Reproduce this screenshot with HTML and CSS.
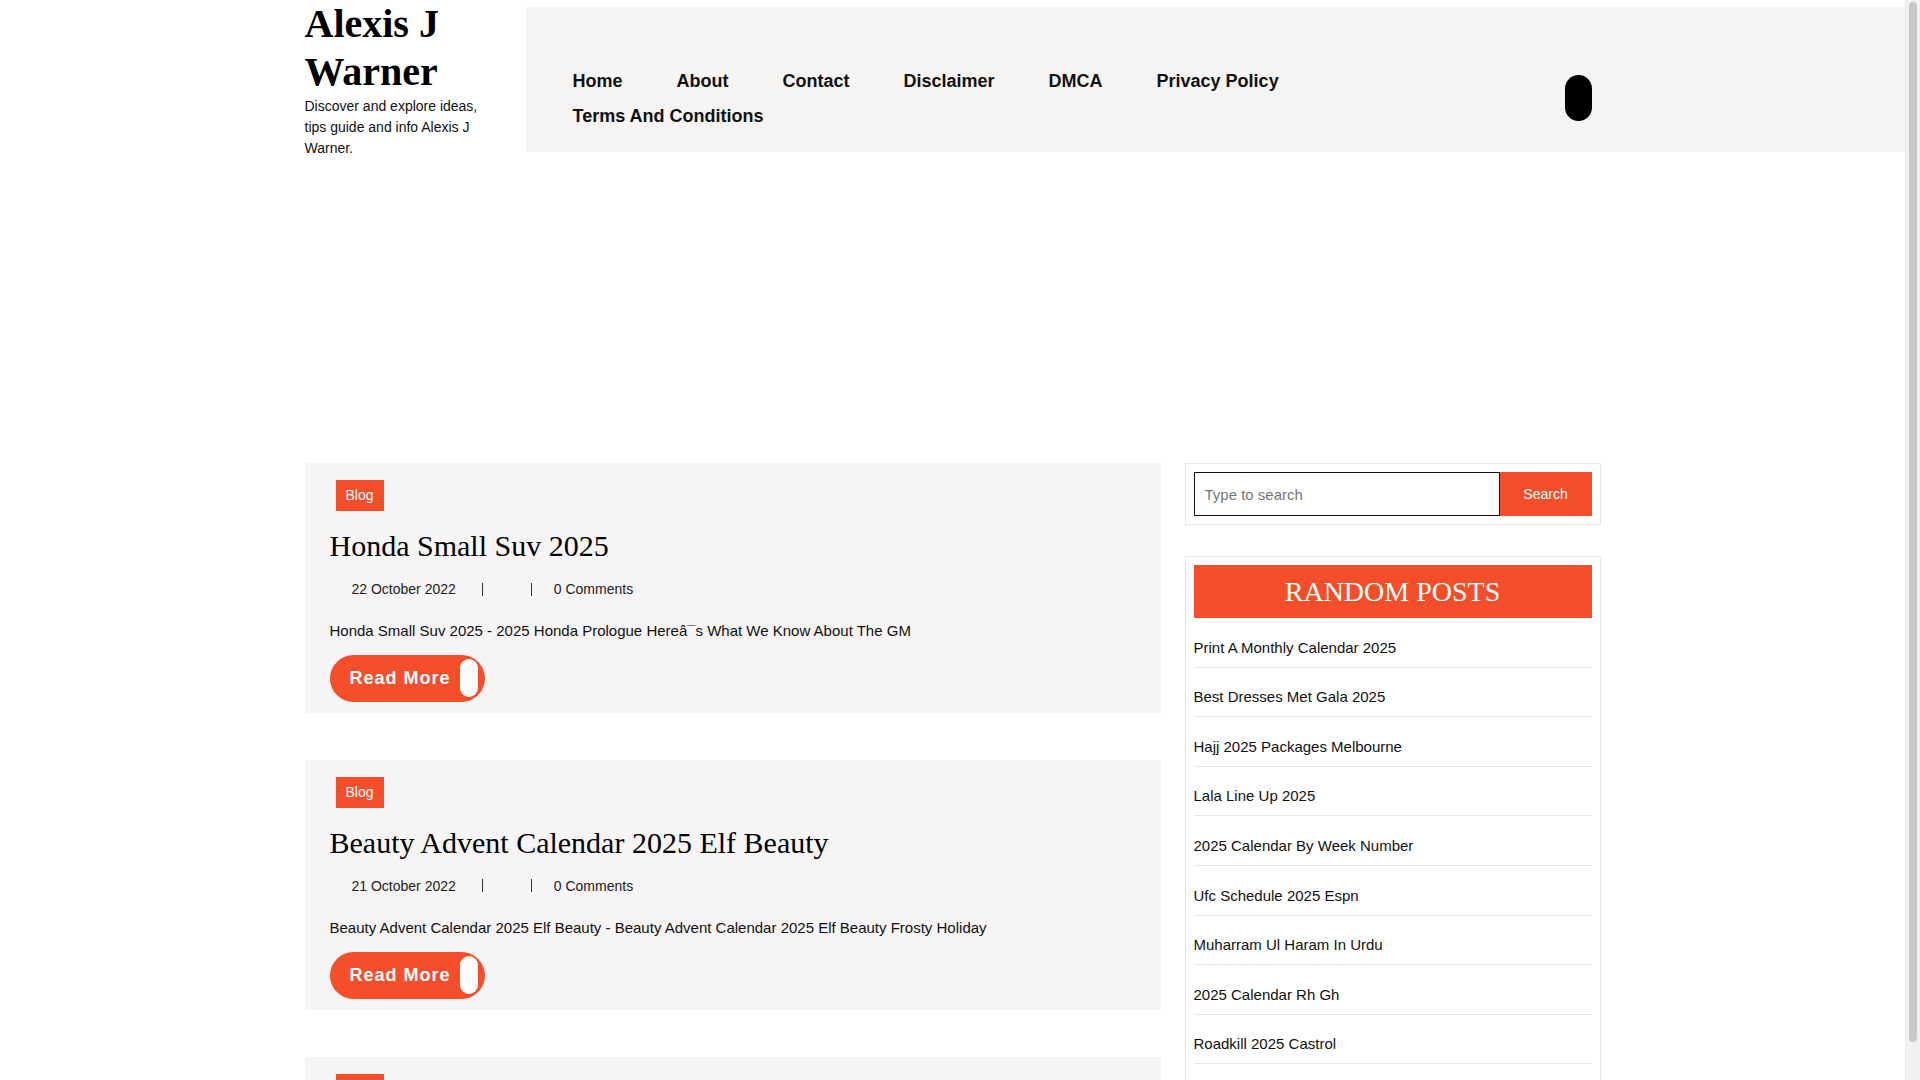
FILE: index.html
```html
<!DOCTYPE html>
<html lang="en">
<head>
<meta charset="utf-8">
<title>Alexis J Warner</title>
<link rel="stylesheet" href="styles.css">
</head>
<body>
<header class="site-header">
  <div class="brand">
    <h1 class="site-title">Alexis J Warner</h1>
    <p class="site-desc">Discover and explore ideas, tips guide and info Alexis J Warner.</p>
  </div>
  <nav class="main-nav">
    <div class="nav-inner">
      <ul class="menu">
        <li><a href="#">Home</a></li>
        <li><a href="#">About</a></li>
        <li><a href="#">Contact</a></li>
        <li><a href="#">Disclaimer</a></li>
        <li><a href="#">DMCA</a></li>
        <li><a href="#">Privacy Policy</a></li>
        <li><a href="#">Terms And Conditions</a></li>
      </ul>
      <button class="nav-toggle" type="button" aria-label="Search"></button>
    </div>
  </nav>
</header>

<main class="content">
  <div class="posts">
    <article class="post">
      <div class="cats"><a class="badge" href="#">Blog</a></div>
      <h2 class="post-title">Honda Small Suv 2025</h2>
      <div class="meta">
        <span class="meta-date">22 October 2022</span>
        <span class="meta-sep"></span>
        <span class="meta-author"></span>
        <span class="meta-sep"></span>
        <span class="meta-comments">0 Comments</span>
      </div>
      <p class="excerpt">Honda Small Suv 2025 - 2025 Honda Prologue Hereâ¯s What We Know About The GM</p>
      <a class="read-more" href="#"><span class="rm-text">Read More</span><span class="rm-knob"></span></a>
    </article>

    <article class="post">
      <div class="cats"><a class="badge" href="#">Blog</a></div>
      <h2 class="post-title">Beauty Advent Calendar 2025 Elf Beauty</h2>
      <div class="meta">
        <span class="meta-date">21 October 2022</span>
        <span class="meta-sep"></span>
        <span class="meta-author"></span>
        <span class="meta-sep"></span>
        <span class="meta-comments">0 Comments</span>
      </div>
      <p class="excerpt">Beauty Advent Calendar 2025 Elf Beauty - Beauty Advent Calendar 2025 Elf Beauty Frosty Holiday</p>
      <a class="read-more" href="#"><span class="rm-text">Read More</span><span class="rm-knob"></span></a>
    </article>

    <article class="post">
      <div class="cats"><a class="badge" href="#">Blog</a></div>
      <h2 class="post-title">2025 Calendar By Week Number</h2>
      <div class="meta">
        <span class="meta-date">20 October 2022</span>
        <span class="meta-sep"></span>
        <span class="meta-author"></span>
        <span class="meta-sep"></span>
        <span class="meta-comments">0 Comments</span>
      </div>
      <p class="excerpt">2025 Calendar By Week Number - Printable 2025 Calendar With Week Numbers</p>
      <a class="read-more" href="#"><span class="rm-text">Read More</span><span class="rm-knob"></span></a>
    </article>
  </div>

  <aside class="sidebar">
    <section class="widget search-widget">
      <form class="search-form">
        <input class="search-input" type="text" placeholder="Type to search">
        <button class="search-btn" type="button">Search</button>
      </form>
    </section>
    <section class="widget random-widget">
      <h3 class="widget-title">RANDOM POSTS</h3>
      <ul class="post-list">
        <li><a href="#">Print A Monthly Calendar 2025</a></li>
        <li><a href="#">Best Dresses Met Gala 2025</a></li>
        <li><a href="#">Hajj 2025 Packages Melbourne</a></li>
        <li><a href="#">Lala Line Up 2025</a></li>
        <li><a href="#">2025 Calendar By Week Number</a></li>
        <li><a href="#">Ufc Schedule 2025 Espn</a></li>
        <li><a href="#">Muharram Ul Haram In Urdu</a></li>
        <li><a href="#">2025 Calendar Rh Gh</a></li>
        <li><a href="#">Roadkill 2025 Castrol</a></li>
        <li><a href="#">Honda Small Suv 2025</a></li>
      </ul>
    </section>
  </aside>
</main>

<div class="scrollbar" aria-hidden="true"><div class="scroll-thumb"></div></div>
</body>
</html>
```
FILE: styles.css
```css
* { box-sizing: border-box; }

body {
  margin: 0 15px 0 0;
  font-family: "Liberation Sans", Arial, sans-serif;
  color: #111;
  background: #fff;
}

a { color: inherit; text-decoration: none; }

/* Header */
.site-header {
  display: grid;
  grid-template-columns: 1fr 221px 1075px 1fr;
  align-items: start;
}

.brand {
  grid-column: 2;
  padding-right: 24px;
}

.site-title {
  margin: 0;
  font-family: "Liberation Serif", "Times New Roman", serif;
  font-weight: 700;
  font-size: 40px;
  line-height: 48px;
  color: #000;
}

.site-desc {
  margin: 0;
  font-size: 14px;
  line-height: 21px;
  color: #111;
}

.main-nav {
  grid-column: 3 / 5;
  margin-top: 7px;
  height: 145px;
  background: #f5f4f2;
}

.nav-inner {
  width: 1075px;
  display: flex;
  align-items: flex-start;
}

.menu {
  list-style: none;
  margin: 0;
  padding: 57px 0 0 47px;
  width: 860px;
  display: flex;
  flex-wrap: wrap;
  column-gap: 54px;
  row-gap: 1px;
  font-size: 18px;
  font-weight: 700;
  line-height: 34px;
  color: #111;
}

.nav-toggle {
  width: 27px;
  height: 46px;
  margin: 68px 9px 0 auto;
  padding: 0;
  border: 0;
  border-radius: 14px;
  background: #000;
}

/* Content */
.content {
  width: 1296px;
  margin: 304px auto 0;
  display: grid;
  grid-template-columns: 856px 416px;
  column-gap: 24px;
  align-items: start;
}

.post {
  background: #f6f4f5;
  padding: 17px 25px 11px;
  margin-bottom: 47px;
}

.cats { display: flex; }

.badge {
  margin-left: 6px;
  padding: 0 10px;
  background: #f44e2a;
  color: #fff;
  font-size: 14px;
  line-height: 31px;
}

.post-title {
  margin: 17px 0 0;
  font-family: "Liberation Serif", "Times New Roman", serif;
  font-weight: 400;
  font-size: 30px;
  line-height: 36px;
  color: #000;
}

.meta {
  display: flex;
  align-items: center;
  margin-top: 15px;
  font-size: 14px;
  line-height: 20px;
  color: #222;
}

.meta-date { padding: 0 26px 0 22px; }
.meta-author { width: 48px; }
.meta-comments { padding-left: 22px; }

.meta-sep {
  width: 1px;
  height: 13px;
  background: #333;
}

.excerpt {
  margin: 20.6px 0 0;
  font-size: 15px;
  line-height: 22px;
  color: #111;
}

.read-more {
  margin-top: 13.4px;
  display: inline-flex;
  align-items: center;
  height: 47px;
  padding: 0 7px 0 20px;
  border-radius: 24px;
  background: #f44e2a;
  color: #fff;
}

.rm-text {
  font-size: 18px;
  font-weight: 700;
  letter-spacing: 1px;
}

.rm-knob {
  width: 18px;
  height: 38px;
  margin-left: 9px;
  border-radius: 9px;
  background: #fff;
}

/* Sidebar */
.widget {
  border: 1px solid #e6e6e6;
  padding: 8px;
  margin-bottom: 31px;
}

.search-form { display: flex; }

.search-input {
  width: 306px;
  height: 44px;
  margin: 0;
  padding: 0 10px;
  border: 1px solid #111;
  font-family: "Liberation Sans", Arial, sans-serif;
  font-size: 15px;
  outline: none;
}

.search-input::placeholder { color: #777; }

.search-btn {
  flex: 1;
  height: 44px;
  margin: 0;
  border: 0;
  background: #f44e2a;
  color: #fff;
  font-family: "Liberation Sans", Arial, sans-serif;
  font-size: 14px;
}

.widget-title {
  margin: 0;
  height: 53px;
  background: #f44e2a;
  color: #fff;
  text-align: center;
  font-family: "Liberation Serif", "Times New Roman", serif;
  font-weight: 400;
  font-size: 28px;
  line-height: 53px;
}

.post-list {
  list-style: none;
  margin: 0;
  padding: 0;
  font-size: 15px;
  line-height: 17px;
  color: #111;
}

.post-list li {
  padding: 20.6px 0 11px;
  border-bottom: 1px solid #e6e6e6;
}

/* Browser scrollbar seen in the screenshot */
.scrollbar {
  position: fixed;
  top: 0;
  right: 0;
  width: 15px;
  height: 100vh;
  background: #f1f1f1;
  border-left: 1px solid #e8e8e8;
}

.scroll-thumb {
  margin: 2px 3px 0 3px;
  height: 1040px;
  border-radius: 4px;
  background: #c8c8c8;
}
```
